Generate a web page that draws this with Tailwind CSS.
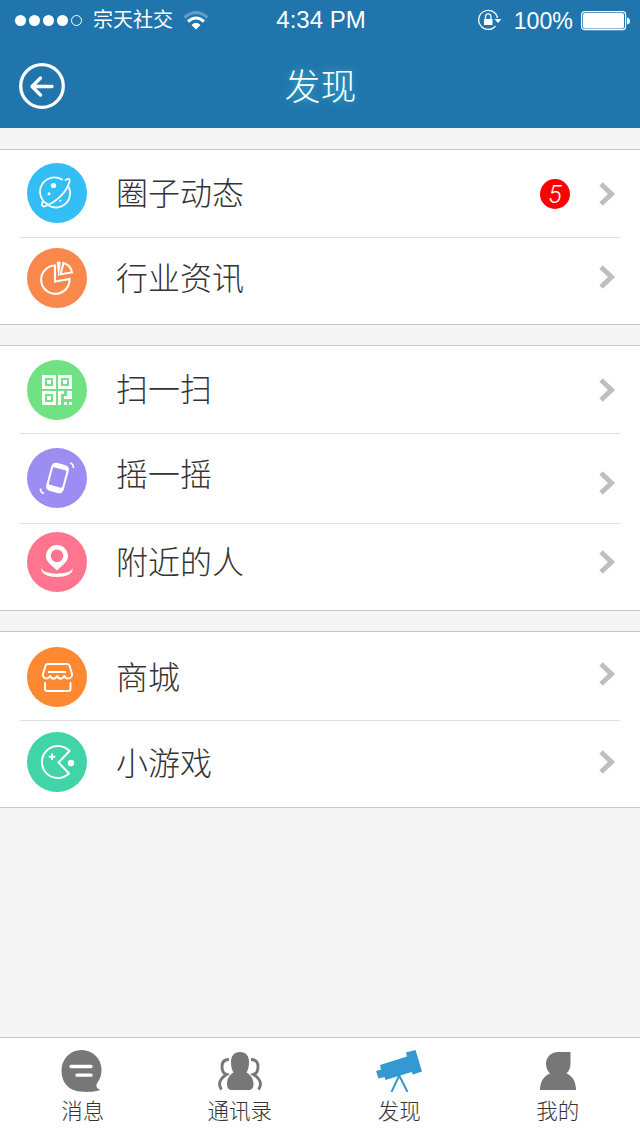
<!DOCTYPE html>
<html lang="zh-CN">
  <head>
    <meta charset="UTF-8" />
    <meta name="viewport" content="width=device-width, initial-scale=1.0" />
    <title>发现</title>
    <script src="https://cdn.jsdelivr.net/npm/@tailwindcss/browser@4"></script>
  </head>
  <body class="bg-[#f5f5f5] font-['Liberation_Sans','Noto_Sans_CJK_SC',sans-serif] font-light text-[#333]">
    <div class="flex flex-col w-[640px] h-[1136px] overflow-hidden">
      <!-- Header -->
      <header class="h-32 shrink-0 bg-[#2075ac] text-white">
        <div class="grid grid-cols-3 h-10 pl-[15px] pr-[10px]">
          <div class="flex items-center">
            <svg class="w-[68px] h-3" viewBox="0 0 68 12" fill="#fff">
              <circle cx="5.5" cy="6.5" r="5.5" />
              <circle cx="19.5" cy="6.5" r="5.5" />
              <circle cx="33.5" cy="6.5" r="5.5" />
              <circle cx="47.5" cy="6.5" r="5.5" />
              <circle cx="61.5" cy="6.5" r="5" fill="none" stroke="#fff" />
            </svg>
            <span class="ml-[10px] text-[20px] leading-5 font-normal whitespace-nowrap">宗天社交</span>
            <svg class="ml-[10px] w-[26px] h-5 shrink-0" viewBox="0 0 26 20" fill="none" stroke="#fff" stroke-width="3">
              <path d="M1.5 7.5Q13 -2.5 24.5 7.5" opacity=".3" />
              <path d="M5 11.5Q13 4.5 21 11.5" />
              <path d="M8.5 15Q13 10.5 17.5 15L13 19.5Z" fill="#fff" stroke="none" />
            </svg>
          </div>
          <div class="pr-[3px] text-center text-[24px] leading-10 whitespace-nowrap">4:34 PM</div>
          <div class="flex items-center justify-end">
            <svg class="w-6 h-[22px]" viewBox="0 0 24 22" fill="none" stroke="#fff" stroke-width="1.3">
              <path d="M19.5 9A9.5 9.5 0 1 0 17.5 17" />
              <path d="M7.5 10V7.500a2.700 2.700 0 0 1 5.400 0V10" />
              <path d="M6 10h8.500v6H6zM16.500 10h7l-3.500 4z" fill="#fff" stroke="none" />
            </svg>
            <span class="ml-3 mt-0.5 text-[23.2px]">100%</span>
            <svg class="ml-2 mt-px w-[49px] h-5" viewBox="0 0 49 20" fill="none">
              <rect x=".6" y=".6" width="44" height="18" rx="3" stroke="#fff" stroke-width="1.2" />
              <rect x="2" y="2" width="41" height="15.5" rx="2" fill="#fff" />
              <path d="M46 6.5q3 .5 3 3.500t-3 3.500z" fill="#fff" />
            </svg>
          </div>
        </div>
        <div class="grid grid-cols-[1fr_auto_1fr] items-center h-[92px] pl-[19px] pr-[18px]">
          <svg class="w-[46px] h-[46px]" viewBox="0 0 46 46" fill="none" stroke="#fff" stroke-width="3.3" stroke-linecap="round" stroke-linejoin="round">
            <circle cx="23" cy="23" r="21.3" />
            <path d="M33 23.5H13M21.500 15L13 23.500l8.500 8.500" />
          </svg>
          <h1 class="mt-1 text-[36px] leading-[46px] [text-shadow:0_0_8px_#3bbbd0]">发现</h1>
        </div>
      </header>

      <main class="flex flex-col grow gap-5 pt-[21px]">
        <section class="bg-white border-y border-[#c8c8c8]">
          <a class="flex items-start mx-5 h-[88px] pl-[7px] pr-1 border-b border-[#e1e1e1]">
            <svg class="mt-[13px] w-[60px] h-[60px]" viewBox="0 0 60 60" fill="none" stroke="#fff" stroke-width="1.8" stroke-linecap="round">
              <circle cx="30" cy="30" r="30" fill="#33bef5" stroke="none" />
              <path d="M35 16.600A14.300 14.300 0 0 0 16.500 38M22.500 43A14.300 14.300 0 0 0 42 24.500" />
              <path d="M38.500 17q5-3 4 1.500C40 29 29 39.500 17.500 43.500c-4 .5-3-6.500.5-4l3 2" />
              <g fill="#fff" stroke="none">
                <circle cx="26.500" cy="22.500" r="2.600" />
                <circle cx="22" cy="30.700" r="1.500" />
                <circle cx="33.300" cy="37.700" r="1" />
              </g>
            </svg>
            <span class="ml-[29px] mt-[28px] text-[32px] leading-8">圈子动态</span>
            <span class="ml-auto mt-[29px] w-[30px] h-[30px] rounded-full bg-[#f00] text-center text-[25px] leading-[31px] italic text-white font-['Roboto']">5</span>
            <svg class="ml-[29px] mt-8 w-[17px] h-6" viewBox="0 0 17 24" fill="none" stroke="#bfbfbf" stroke-width="5"><path d="M2 2l10.500 10L2 22" /></svg>
          </a>
          <a class="flex items-start mx-5 h-[86px] pl-[7px] pr-1">
            <svg class="mt-[10px] w-[60px] h-[60px]" viewBox="0 0 60 60" fill="none" stroke="#fff" stroke-width="2.1">
              <circle cx="30" cy="30" r="30" fill="#fa874b" stroke="none" />
              <path d="M28 17.500A14.200 14.200 0 1 0 42.500 31l-14.500 2.500z" />
              <path d="M30 14h3.500L31.500 28z" fill="#fff" stroke="#fff" stroke-width=".6" />
              <path d="M36.500 15q7 2 8.500 9.500l-11.500 1.800z" />
            </svg>
            <span class="ml-[29px] mt-[25px] text-[32px] leading-8">行业资讯</span>
            <svg class="ml-auto mt-[27px] w-[17px] h-6" viewBox="0 0 17 24" fill="none" stroke="#bfbfbf" stroke-width="5"><path d="M2 2l10.500 10L2 22" /></svg>
          </a>
        </section>

        <section class="bg-white border-y border-[#c8c8c8]">
          <a class="flex items-start mx-5 h-[88px] pl-[7px] pr-1 border-b border-[#e1e1e1]">
            <svg class="mt-[14px] w-[60px] h-[60px]" viewBox="0 0 60 60" fill="#fff">
              <circle cx="30" cy="30" r="30" fill="#70e283" />
              <g fill="none" stroke="#fff" stroke-width="3">
                <path d="M16.500 16.500h11v11h-11zM32.500 16.500h11v11h-11zM16.500 32.500h11v11h-11z" />
              </g>
              <path d="M20 20h4v4h-4zM36 20h4v4h-4zM20 36h4v4h-4z" />
              <path d="M31 31h6v5h3v-5h3v0h2v8h-8v-5h-3v11h-3zM37 42h3v3h-3zM42 42h3v3h-3z" />
            </svg>
            <span class="ml-[29px] mt-[28px] text-[32px] leading-8">扫一扫</span>
            <svg class="ml-auto mt-8 w-[17px] h-6" viewBox="0 0 17 24" fill="none" stroke="#bfbfbf" stroke-width="5"><path d="M2 2l10.500 10L2 22" /></svg>
          </a>
          <a class="flex items-start mx-5 h-[90px] pl-[7px] pr-1 border-b border-[#e1e1e1]">
            <svg class="mt-[14px] w-[60px] h-[60px]" viewBox="0 0 60 60" fill="none" stroke="#fff">
              <circle cx="30" cy="30" r="30" fill="#9b8df1" stroke="none" />
              <g transform="rotate(15 30.500 30)">
                <rect x="21.500" y="15.500" width="18" height="29" rx="4.500" fill="#fff" stroke="none" />
                <rect x="23.500" y="20.500" width="14" height="18" rx="1.500" fill="#9b8df1" stroke="none" />
              </g>
              <path d="M43 15q3.500 1 3.500 5M13.500 40.500q0 4 3.500 5" stroke-width="1.700" />
            </svg>
            <span class="ml-[29px] mt-[25px] text-[32px] leading-8">摇一摇</span>
            <svg class="ml-auto mt-[37px] w-[17px] h-6" viewBox="0 0 17 24" fill="none" stroke="#bfbfbf" stroke-width="5"><path d="M2 2l10.500 10L2 22" /></svg>
          </a>
          <a class="flex items-start mx-5 h-[86px] pl-[7px] pr-1">
            <svg class="mt-2 w-[60px] h-[60px]" viewBox="0 0 60 60" fill="#fff">
              <circle cx="30" cy="30" r="30" fill="#ff7590" />
              <path fill-rule="evenodd" d="M30 13a11 11 0 0 1 11 11c0 5-3.500 7.500-11 14.500C22.500 31.500 19 29 19 24a11 11 0 0 1 11-11zm0 4.500a6.300 6.300 0 1 0 0 12.600 6.300 6.300 0 0 0 0-12.600z" />
              <path d="M14.500 36c1 7.500 30 7.500 31 0 3 12-34 12-31 0z" />
            </svg>
            <span class="ml-[29px] mt-[23px] text-[32px] leading-8">附近的人</span>
            <svg class="ml-auto mt-[26px] w-[17px] h-6" viewBox="0 0 17 24" fill="none" stroke="#bfbfbf" stroke-width="5"><path d="M2 2l10.500 10L2 22" /></svg>
          </a>
        </section>

        <section class="bg-white border-y border-[#c8c8c8]">
          <a class="flex items-start mx-5 h-[89px] pl-[7px] pr-1 border-b border-[#e1e1e1]">
            <svg class="mt-[15px] w-[60px] h-[60px]" viewBox="0 0 60 60" fill="none" stroke="#fff" stroke-width="2" stroke-linecap="round" stroke-linejoin="round">
              <circle cx="30" cy="30" r="30" fill="#ff8833" stroke="none" />
              <path d="M21 17h19q2 0 2.700 2L45 27c.5 3-2 4.500-4 4.500s-3-1-3.700-2.500c-2 3.500-5.500 3.500-7 0-2 3.500-5.500 3.500-7 0-1 1.500-2 2.500-4 2.500s-4-2-3.300-4.500l2.500-8q.5-2 2.500-2z" />
              <path d="M21 25h18" stroke-linecap="butt" />
              <path d="M18 36v6q0 2 2 2h21.500q2 0 2-2v-6" />
            </svg>
            <span class="ml-[29px] mt-[30px] text-[32px] leading-8">商城</span>
            <svg class="ml-auto mt-[30px] w-[17px] h-6" viewBox="0 0 17 24" fill="none" stroke="#bfbfbf" stroke-width="5"><path d="M2 2l10.500 10L2 22" /></svg>
          </a>
          <a class="flex items-start mx-5 h-[86px] pl-[7px] pr-1">
            <svg class="mt-[11px] w-[60px] h-[60px]" viewBox="0 0 60 60" fill="none" stroke="#fff" stroke-width="2" stroke-linejoin="round">
              <circle cx="30" cy="30" r="30" fill="#41d4a8" stroke="none" />
              <path d="M42.500 19A16 16 0 1 0 42 41.500L31.500 30.500z" />
              <path d="M25 21.500v6.500M21.700 24.700h6.500" />
              <circle cx="44" cy="31" r="3.200" fill="#fff" stroke="none" />
            </svg>
            <span class="ml-[29px] mt-[27px] text-[32px] leading-8">小游戏</span>
            <svg class="ml-auto mt-[29px] w-[17px] h-6" viewBox="0 0 17 24" fill="none" stroke="#bfbfbf" stroke-width="5"><path d="M2 2l10.500 10L2 22" /></svg>
          </a>
        </section>
      </main>

      <!-- Tab bar -->
      <nav class="grid grid-cols-4 h-[99px] shrink-0 px-[3px] pt-3 bg-white border-t border-[#c8c8c8] text-[21.5px] leading-6">
        <a class="flex flex-col items-center gap-2">
          <svg class="w-[42px] h-[42px]" viewBox="0 0 42 42" fill="#777">
            <path d="M20.500 0a20 20 0 0 1 20 20c0 8-3.500 11-5 14.500-.5 3 1 5 4 5-4 2.500-13 2.500-18 2.300C8 41.500.5 33 .5 21A20 20 0 0 1 20.500 0z" />
            <path d="M10 16.500h20M16 25.200h14" stroke="#fff" stroke-width="3.300" stroke-linecap="round" />
          </svg>
          <span class="pl-px">消息</span>
        </a>
        <a class="flex flex-col items-center gap-2 pr-[2px]">
          <svg class="w-11 h-[42px]" viewBox="0 0 44 42" fill="#777">
            <path d="M22 2c6 0 9 4 9 10 0 5-1 8-2.500 10.500C33 25 35.500 29 35.500 34c0 4-2 6-5 6H14c-3 0-5-2-5-6 0-5 2-9 6.500-11.500C14 20 13 17 13 12c0-6 3-10 9-10z" />
            <path d="M11 9.500C5 9.500 4 13 4 16.500c0 4 .5 7 4.500 8C4 27.500 1.500 31 1.500 34q0 3 2 5.500M33 9.500c6 0 7 3.500 7 7 0 4-.5 7-4.500 8 4.500 3 7 6.500 7 9.500q0 3-2 5.500" fill="none" stroke="#777" stroke-width="2.900" />
          </svg>
          <span>通讯录</span>
        </a>
        <a class="flex flex-col items-center gap-2">
          <svg class="w-[46px] h-[42px]" viewBox="0 0 46 42" fill="#3498d3">
            <path d="M30 2.500L39.500 0 46 21.500 37 24.500 35.500 22 9.500 30 8.500 27 2.500 28.500 0 21 5 19.500 4 15 31 6.500z" />
            <path d="M23.500 25L15.500 42M23 25l8.500 17" stroke="#3498d3" stroke-width="2" />
          </svg>
          <span>发现</span>
        </a>
        <a class="flex flex-col items-center gap-2">
          <svg class="w-9 h-[42px]" viewBox="0 0 36 42" fill="#777">
            <path d="M18 2h12.500v12c0 4-1.500 7-4 9.500 6 2.500 9.500 8 9.500 16.500H0c0-8.500 4-14 10-16.500C7.500 21 6 18 6 14 6 7 11 2 18 2z" />
          </svg>
          <span>我的</span>
        </a>
      </nav>
    </div>
  </body>
</html>
